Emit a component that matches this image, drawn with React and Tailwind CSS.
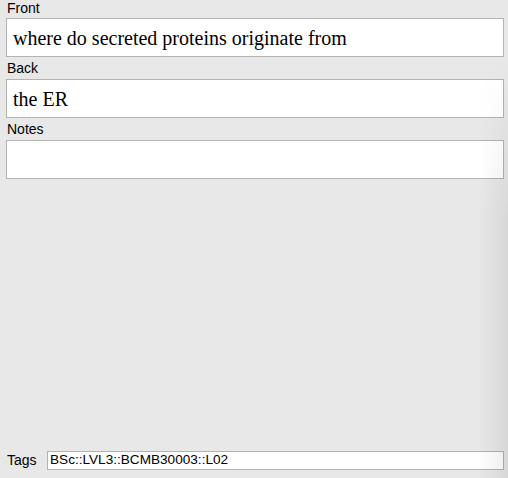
export default function App() {
  const sans = { fontFamily: '"Liberation Sans", Arial, sans-serif' };
  const serif = { fontFamily: '"Liberation Serif", "Times New Roman", serif' };
  return (
    <div className="relative w-[508px] h-[478px] bg-[#e8e8e8] flex flex-col pl-[6px] pr-[4px] overflow-hidden text-black" style={sans}>
      <div className="h-[19px] text-[14px] leading-[19px] pl-[1px] -mt-[1px]">Front</div>
      <div className="h-[39px] bg-white border border-[#b3b3b3] flex items-center pl-[6px] text-[20px]" style={serif}>
        where do secreted proteins originate from
      </div>
      <div className="h-[22px] text-[14px] leading-[19px] pl-[1px] pt-[2px]">Back</div>
      <div className="h-[39px] bg-white border border-[#b3b3b3] flex items-center pl-[6px] text-[20px]" style={serif}>
        the ER
      </div>
      <div className="h-[22px] text-[14px] leading-[19px] pl-[1px] pt-[2px]">Notes</div>
      <div className="h-[39px] bg-white border border-[#b3b3b3]"></div>
      <div className="flex-1"></div>
      <div className="flex items-center h-[19px] mb-[8px]">
        <div className="w-[41px] text-[14px] pl-[1px]">Tags</div>
        <div className="flex-1 h-[19px] bg-white border border-[#b3b3b3] flex items-center pl-[2px] text-[13.6px]">
          BSc::LVL3::BCMB30003::L02
        </div>
      </div>
      <div className="pointer-events-none absolute top-[60px] right-0 bottom-0 w-[30px] bg-gradient-to-r from-transparent to-[#00000012] [mask-image:linear-gradient(to_bottom,transparent,black_40%)]"></div>
    </div>
  );
}
